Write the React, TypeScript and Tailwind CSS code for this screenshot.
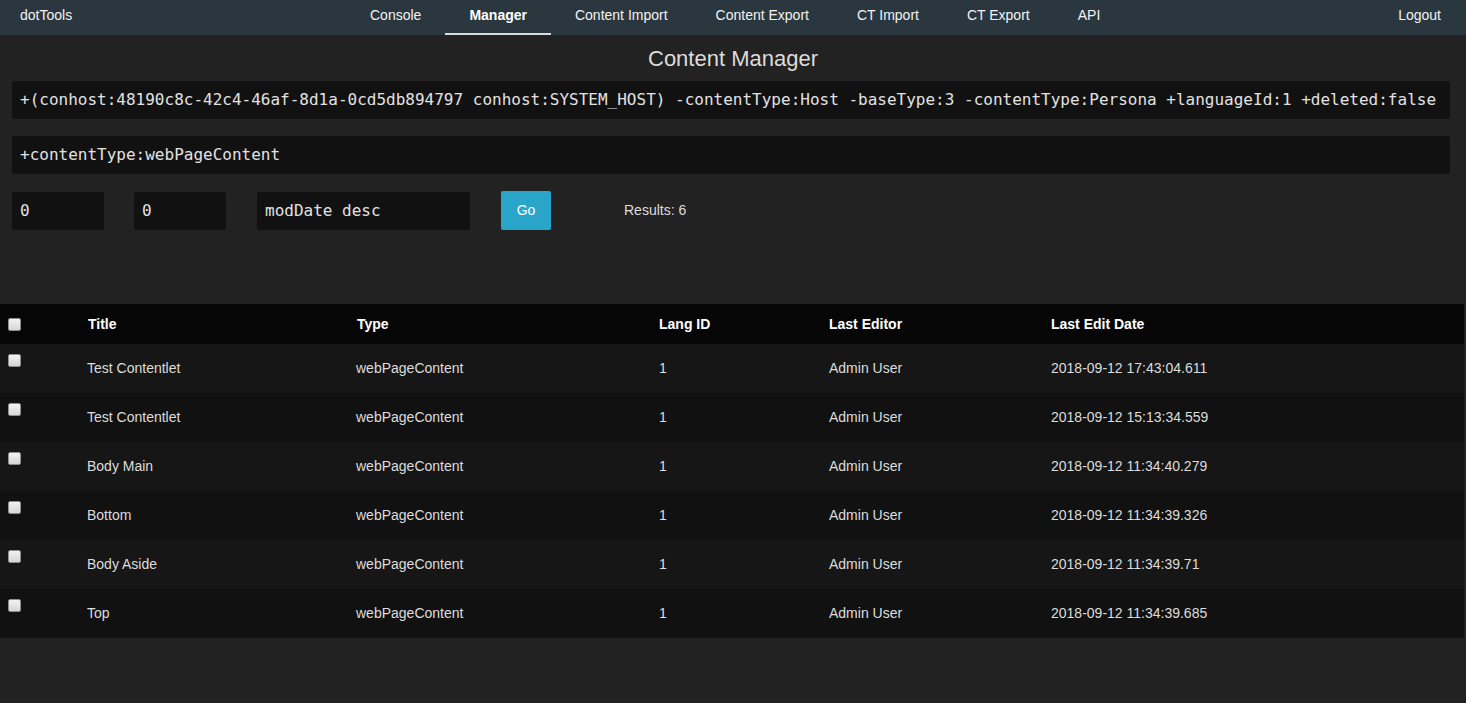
import React from "react"

const navItems = ["Console", "Manager", "Content Import", "Content Export", "CT Import", "CT Export", "API"]

const rows = [
  { title: "Test Contentlet", type: "webPageContent", lang: "1", editor: "Admin User", date: "2018-09-12 17:43:04.611" },
  { title: "Test Contentlet", type: "webPageContent", lang: "1", editor: "Admin User", date: "2018-09-12 15:13:34.559" },
  { title: "Body Main", type: "webPageContent", lang: "1", editor: "Admin User", date: "2018-09-12 11:34:40.279" },
  { title: "Bottom", type: "webPageContent", lang: "1", editor: "Admin User", date: "2018-09-12 11:34:39.326" },
  { title: "Body Aside", type: "webPageContent", lang: "1", editor: "Admin User", date: "2018-09-12 11:34:39.71" },
  { title: "Top", type: "webPageContent", lang: "1", editor: "Admin User", date: "2018-09-12 11:34:39.685" },
]

const query =
  "+(conhost:48190c8c-42c4-46af-8d1a-0cd5db894797 conhost:SYSTEM_HOST) -contentType:Host -baseType:3 -contentType:Persona +languageId:1 +deleted:false"

function Checkbox() {
  return (
    <div className="w-[13px] h-[13px] rounded-[2px] border border-[#8f8f8f] bg-gradient-to-b from-[#f2f2f2] to-[#d6d6d6]" />
  )
}

const cols = "grid grid-cols-[88px_269px_302px_170px_222px_1fr]"

export default function App() {
  return (
    <div className="min-h-[703px] bg-[#222222] font-['Liberation_Sans',Arial,sans-serif] text-[14px] text-[#dddddd]">
      {/* top nav */}
      <div className="h-[35px] bg-[#2b373f] flex items-stretch text-[#f2f2f2]">
        <div className="w-[346px] pl-[20px] flex items-center pb-[4px]">dotTools</div>
        <div className="flex items-stretch">
          {navItems.map((n) => (
            <div
              key={n}
              className={
                n === "Manager"
                  ? "px-6 flex items-center pb-[2px] font-bold text-white border-b-2 border-[#dcdcdc]"
                  : "px-6 flex items-center pb-[4px]"
              }
            >
              {n}
            </div>
          ))}
        </div>
        <div className="flex-1" />
        <div className="pr-[25px] flex items-center pb-[4px]">Logout</div>
      </div>

      <div className="h-[46px] flex items-center justify-center text-[22px] text-[#dcdcdc]">Content Manager</div>

      <div className="ml-[12px] mr-[16px] flex flex-col gap-[17px] font-['DejaVu_Sans_Mono',monospace] text-[16px] text-[#e2e2e2]">
        <div className="h-[38px] bg-[#111111] rounded-[3px] pl-[8px] flex items-center whitespace-nowrap overflow-hidden">
          {query}
        </div>
        <div className="h-[38px] bg-[#111111] rounded-[3px] pl-[8px] flex items-center">+contentType:webPageContent</div>
        <div className="flex items-center">
          <div className="w-[92px] h-[38px] bg-[#111111] rounded-[3px] pl-[8px] flex items-center">0</div>
          <div className="ml-[30px] w-[92px] h-[38px] bg-[#111111] rounded-[3px] pl-[8px] flex items-center">0</div>
          <div className="ml-[31px] w-[213px] h-[38px] bg-[#111111] rounded-[3px] pl-[8px] flex items-center">modDate desc</div>
          <div className="ml-[31px] w-[50px] h-[39px] bg-[#2aa5ca] rounded-[2px] flex items-center justify-center font-['Liberation_Sans',Arial,sans-serif] text-[14px] text-white">
            Go
          </div>
          <div className="ml-[73px] font-['Liberation_Sans',Arial,sans-serif] text-[14px] text-[#dddddd]">Results: 6</div>
        </div>
      </div>

      {/* table */}
      <div className="mt-[74px] mr-[2px]">
        <div className={`${cols} h-[40px] items-center bg-[#060606] font-bold text-white`}>
          <div className="pl-[8px]">
            <Checkbox />
          </div>
          <div>Title</div>
          <div>Type</div>
          <div>Lang ID</div>
          <div>Last Editor</div>
          <div>Last Edit Date</div>
        </div>
        {rows.map((r, i) => (
          <div key={i} className={`${cols} h-[49px] items-center ${i % 2 === 0 ? "bg-[#161616]" : "bg-[#111111]"}`}>
            <div className="pl-[8px] self-start pt-[10px]">
              <Checkbox />
            </div>
            <div className="-ml-px">{r.title}</div>
            <div className="-ml-px">{r.type}</div>
            <div>{r.lang}</div>
            <div>{r.editor}</div>
            <div>{r.date}</div>
          </div>
        ))}
      </div>
    </div>
  )
}
